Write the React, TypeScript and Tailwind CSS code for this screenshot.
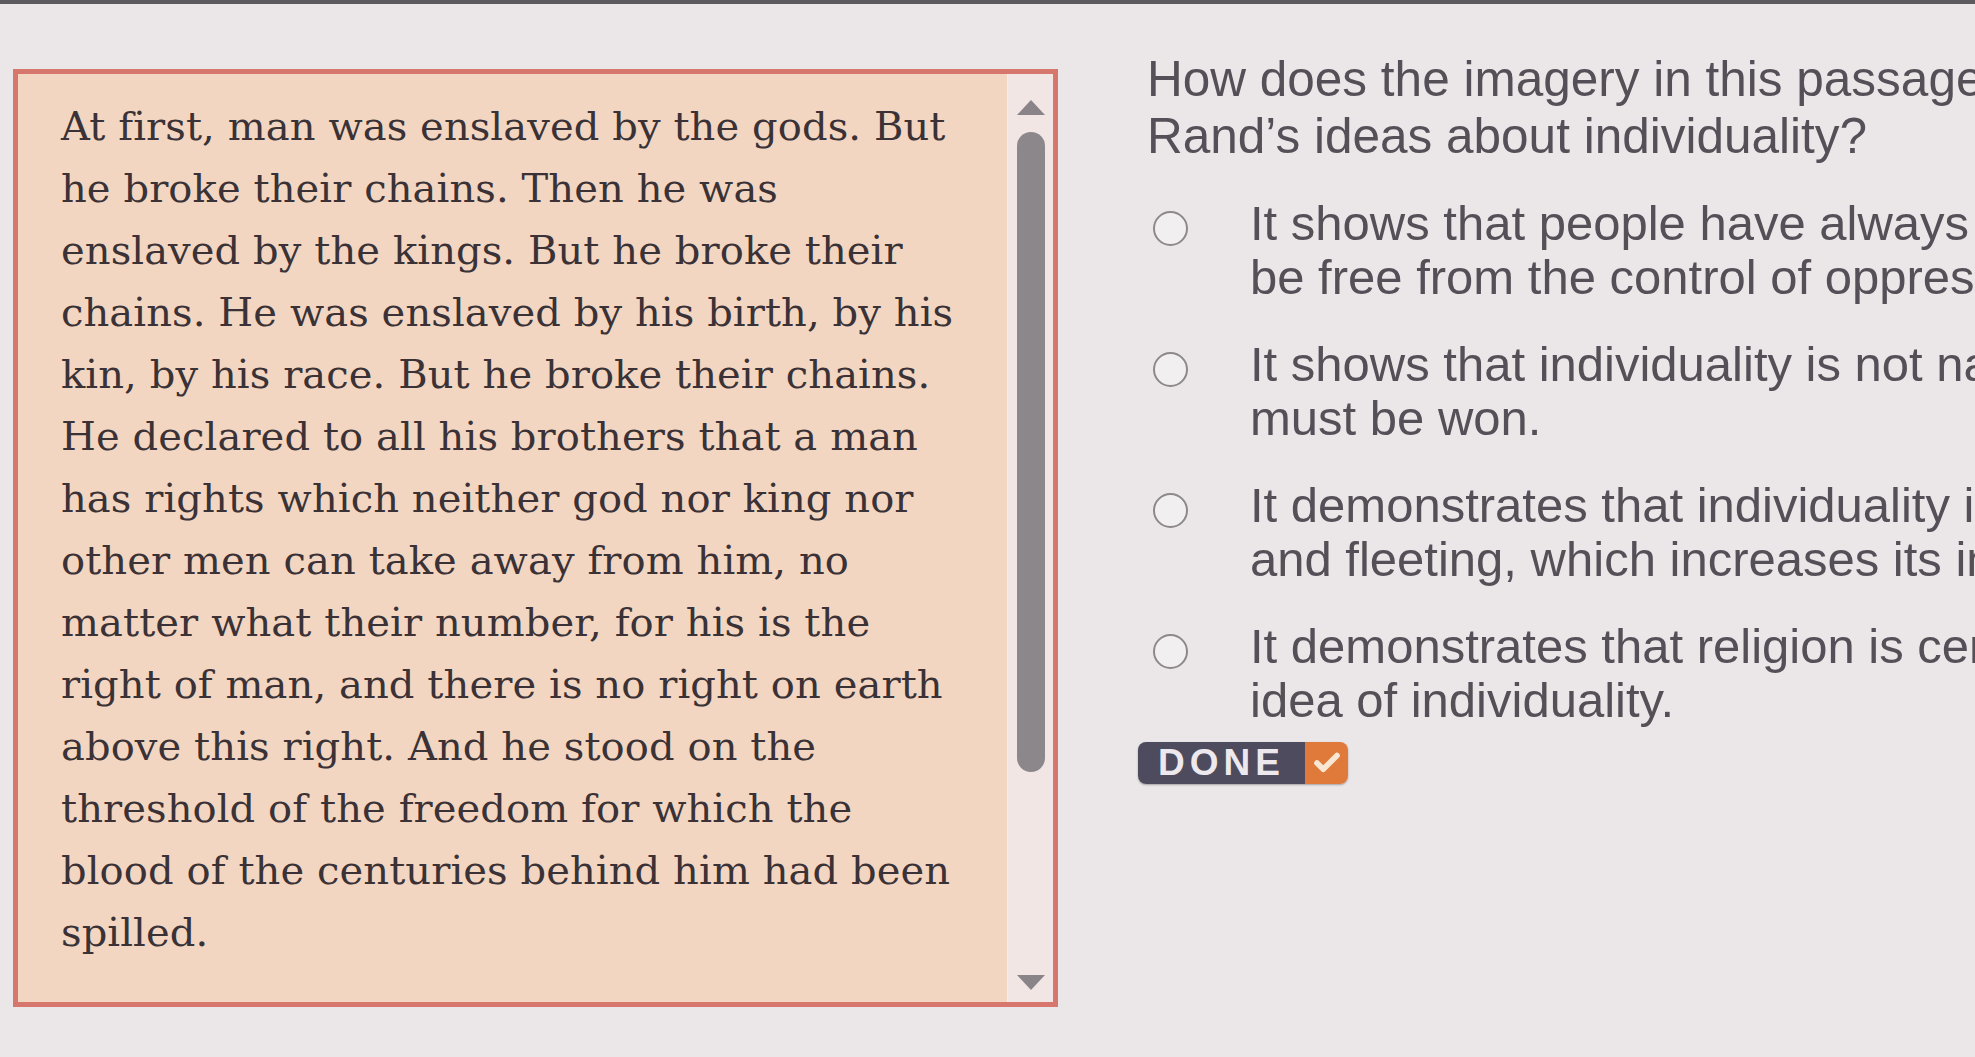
import { Check } from "lucide-react";

const passageLines = [
  "At first, man was enslaved by the gods. But",
  "he broke their chains. Then he was",
  "enslaved by the kings. But he broke their",
  "chains. He was enslaved by his birth, by his",
  "kin, by his race. But he broke their chains.",
  "He declared to all his brothers that a man",
  "has rights which neither god nor king nor",
  "other men can take away from him, no",
  "matter what their number, for his is the",
  "right of man, and there is no right on earth",
  "above this right. And he stood on the",
  "threshold of the freedom for which the",
  "blood of the centuries behind him had been",
  "spilled.",
];

const options = [
  ["It shows that people have always wanted to", "be free from the control of oppressive forces."],
  ["It shows that individuality is not natural but", "must be won."],
  ["It demonstrates that individuality is temporary", "and fleeting, which increases its importance."],
  ["It demonstrates that religion is central to the", "idea of individuality."],
];

function Passage() {
  return (
    <section className="ml-[13px] mt-[65px] flex h-[938px] w-[1045px] shrink-0 border-[5px] border-[#d6766d] bg-[#f3d6c1]">
      <div className="flex-1 pl-[43px] pt-[21px] font-['DejaVu_Serif',serif] text-[40px] leading-[62px] tracking-[0.1px] text-[#3a3236]">
        {passageLines.map((line) => (
          <p key={line} className="whitespace-nowrap">
            {line}
          </p>
        ))}
      </div>
      <div className="flex w-[46px] flex-col items-center border-l border-[#f7ecea] bg-[#f1e6e4]">
        <svg width="28" height="15" viewBox="0 0 28 15" className="mt-[26px]">
          <polygon points="14,0 28,15 0,15" fill="#8a8489" />
        </svg>
        <div className="mt-[17px] h-[640px] w-[28px] rounded-full bg-[#8c878b]" />
        <svg width="28" height="15" viewBox="0 0 28 15" className="mb-[12px] mt-auto">
          <polygon points="0,0 28,0 14,15" fill="#8a8489" />
        </svg>
      </div>
    </section>
  );
}

function Question() {
  return (
    <section className="ml-[89px] mt-[46px] flex shrink-0 flex-col font-['Liberation_Sans',Arial,sans-serif] text-[#555057]">
      <h2 className="text-[49.5px] leading-[57px]">
        <span className="block whitespace-nowrap">How does the imagery in this passage support</span>
        <span className="block whitespace-nowrap">Rand&rsquo;s ideas about individuality?</span>
      </h2>

      <div className="mt-[32px] flex flex-col gap-[33px]">
        {options.map(([first, second]) => (
          <label key={first} className="flex items-start pl-[6px]">
            <span className="mt-[15px] h-[35px] w-[35px] shrink-0 rounded-full border-2 border-[#8d888b] bg-[#f2eff1]" />
            <span className="ml-[62px] text-[49px] leading-[54px]">
              <span className="block whitespace-nowrap">{first}</span>
              <span className="block whitespace-nowrap">{second}</span>
            </span>
          </label>
        ))}
      </div>

      <button
        type="button"
        className="-ml-[9px] mt-[15px] flex h-[42px] w-[210px] overflow-hidden rounded-[8px] shadow-[0_1px_2px_rgba(0,0,0,0.3)]"
      >
        <span className="flex w-[167px] items-center justify-center bg-[#4d4b5d] font-['Liberation_Sans',Arial,sans-serif] text-[37px] font-bold tracking-[5px] text-[#ece8ee]">
          DONE
        </span>
        <span className="flex flex-1 items-center justify-center bg-[#df7a3b]">
          <Check size={30} strokeWidth={4.5} color="#f9e7d4" />
        </span>
      </button>
    </section>
  );
}

export default function App() {
  return (
    <main className="h-[1057px] w-[1975px] overflow-hidden bg-[#ebe7e9]">
      <div className="h-[4px] bg-[#5e5b5e]" />
      <div className="flex items-start">
        <Passage />
        <Question />
      </div>
    </main>
  );
}
